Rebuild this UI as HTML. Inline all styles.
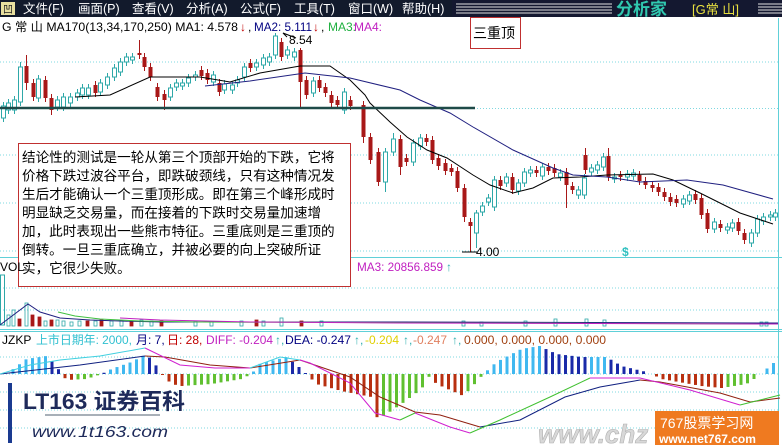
<!DOCTYPE html>
<html><head><meta charset="utf-8">
<style>
html,body{margin:0;padding:0;background:#fff;width:782px;height:445px;overflow:hidden}
svg{display:block}
text{font-family:"Liberation Sans","Noto Sans CJK SC",sans-serif}
.cj{font-family:"Liberation Sans","Noto Sans CJK SC",sans-serif}
</style></head><body>
<svg id="s" width="782" height="445" viewBox="0 0 782 445" xmlns="http://www.w3.org/2000/svg">
<rect width="782" height="445" fill="#fff"/>
<rect x="0" y="0" width="782" height="17" fill="#141830"/>
<rect x="0" y="0" width="452" height="17" fill="#121a2c"/>
<rect x="1" y="2" width="14" height="13" fill="#e8e0a0"/>
<text x="3" y="13" font-size="10" fill="#202020">凹</text>
<g font-size="12.5" fill="#fff" class="cj">
<text x="23" y="13">文件(F)</text><text x="78" y="13">画面(P)</text><text x="132" y="13">查看(V)</text>
<text x="186" y="13">分析(A)</text><text x="240" y="13">公式(F)</text><text x="294" y="13">工具(T)</text>
<text x="348" y="13">窗口(W)</text><text x="402" y="13">帮助(H)</text>
</g>
<g stroke="#e0e0e0" stroke-width="1">
<line x1="456" y1="4" x2="612" y2="4"/><line x1="456" y1="7" x2="612" y2="7"/><line x1="456" y1="10" x2="612" y2="10"/><line x1="456" y1="13" x2="612" y2="13"/>
<line x1="758" y1="4" x2="782" y2="4"/><line x1="758" y1="7" x2="782" y2="7"/><line x1="758" y1="10" x2="782" y2="10"/><line x1="758" y1="13" x2="782" y2="13"/>
</g>
<text x="616" y="15" font-size="17" font-weight="bold" fill="#30c8b0">分析家</text>
<text x="692" y="14" font-size="13" fill="#e8e040">[G常 山]</text>

<g font-size="12">
<text x="2" y="31" fill="#000" textLength="236" lengthAdjust="spacingAndGlyphs">G 常 山  MA170(13,34,170,250)  MA1: 4.578</text>
<text x="240" y="31" fill="#c00000">↓</text><text x="248" y="31" fill="#000">,</text>
<text x="254" y="31" fill="#000080" textLength="58" lengthAdjust="spacingAndGlyphs">MA2: 5.111</text>
<text x="313" y="31" fill="#c00000">↓</text><text x="321" y="31" fill="#000">,</text>
<text x="328" y="31" fill="#20b040">MA3:</text><text x="354" y="31" fill="#c020c0">MA4:</text>
</g>
<rect x="470.5" y="17.5" width="50" height="31" fill="#fff" stroke="#c03030"/>
<text x="473" y="38" font-size="14" fill="#000">三重顶</text>

<g stroke="#7fd8e0" stroke-dasharray="1,2" stroke-width="1">
<line x1="0" y1="62" x2="778" y2="62"/><line x1="0" y1="108.5" x2="778" y2="108.5"/>
<line x1="0" y1="155" x2="778" y2="155"/><line x1="0" y1="203" x2="778" y2="203"/>
<line x1="0" y1="251" x2="778" y2="251"/>
<line x1="0" y1="288" x2="778" y2="288"/><line x1="0" y1="310" x2="778" y2="310"/>
<line x1="0" y1="357" x2="778" y2="357"/><line x1="0" y1="374" x2="778" y2="374"/>
<line x1="0" y1="392" x2="778" y2="392"/><line x1="0" y1="410" x2="778" y2="410"/>
<line x1="0" y1="428" x2="778" y2="428"/>
</g>
<g stroke="#60d0d8" stroke-width="1">
<line x1="0" y1="257.5" x2="782" y2="257.5"/><line x1="0" y1="329.5" x2="782" y2="329.5"/>
<line x1="0" y1="331.5" x2="782" y2="331.5"/>
<line x1="778.5" y1="18" x2="778.5" y2="445"/>
</g>
<g id="candles"></g>
<g fill="none" stroke-width="1">
<polyline stroke="#000" points="75,97 110,95 150,77 200,77 230,82 260,73 300,66 330,66 350,80 365,95 370,103 390,122 407,137 427,150 447,158 473,175 490,185 513,193 533,188 553,178 580,177 607,175 653,174 673,180 700,193 740,213 773,224"/>
<polyline stroke="#202080" points="205,86 250,81 305,73 350,78 400,90 420,100 450,113 473,127 513,150 553,168 573,175 607,177 640,182 687,180 723,185 773,199"/>
</g>
<line x1="0" y1="108" x2="475" y2="108" stroke="#1e4a48" stroke-width="2.5"/>
<g font-size="12" fill="#000">
<polyline points="296,38 283,33 287,37" fill="none" stroke="#000"/><text x="289" y="44">8.54</text>
<polyline points="462,252 477,252" stroke="#000"/><text x="476" y="256">4.00</text>
<text x="622" y="256" fill="#30c0c0" font-weight="bold">$</text>
</g>

<rect x="18.5" y="143.5" width="332" height="143" fill="#fff" stroke="#c03030"/>
<g font-size="13.6" fill="#000" class="cj">
<text x="22" y="162">结论性的测试是一轮从第三个顶部开始的下跌，它将</text>
<text x="22" y="180.5">价格下跌过波谷平台，即跌破颈线，只有这种情况发</text>
<text x="22" y="199">生后才能确认一个三重顶形成。即在第三个峰形成时</text>
<text x="22" y="217.5">明显缺乏交易量，而在接着的下跌时交易量加速增</text>
<text x="22" y="236">加，此时表现出一些熊市特征。三重底则是三重顶的</text>
<text x="22" y="254.5">倒转。一旦三重底确立，并被必要的向上突破所证</text>
<text x="22" y="273">实，它很少失败。</text>
</g>
<text x="0" y="271" font-size="12" fill="#000">VOL</text>
<text x="357" y="271" font-size="12" fill="#c020c0" textLength="86" lengthAdjust="spacingAndGlyphs">MA3: 20856.859</text>
<text x="446" y="271" font-size="12" fill="#30b0b0">↑</text>
<g id="vol"></g>
<g font-size="12">
<text x="2" y="344" fill="#000">JZKP</text>
<text x="36" y="344" fill="#30c0d0" textLength="96" lengthAdjust="spacingAndGlyphs">上市日期年: 2000,</text>
<text x="136" y="344" fill="#000080">月: 7,</text>
<text x="167" y="344" fill="#c00000">日: 28,</text>
<text x="206" y="344" fill="#c020c0" textLength="67" lengthAdjust="spacingAndGlyphs">DIFF: -0.204</text><text x="275" y="344" fill="#30b0b0">↑,</text>
<text x="285" y="344" fill="#000080" textLength="66" lengthAdjust="spacingAndGlyphs">DEA: -0.247</text><text x="354" y="344" fill="#30b0b0">↑,</text>
<text x="365" y="344" fill="#e0d000">-0.204</text><text x="403" y="344" fill="#30b0b0">↑,</text>
<text x="413" y="344" fill="#e08060">-0.247</text><text x="452" y="344" fill="#30b0b0">↑,</text>
<text x="464" y="344" fill="#a04010" textLength="142" lengthAdjust="spacingAndGlyphs">0.000, 0.000, 0.000, 0.000</text>
</g>
<g id="hist"></g>
<g fill="none" stroke-width="1">
<polyline stroke="#102080" points="0,374 80,365 145,356"/>
<polyline stroke="#902010" points="145,356 165,357 210,365 250,368 300,360 350,377 380,397 415,412 440,415 480,427"/>
<polyline stroke="#102080" points="480,427 520,420 565,397 600,387 640,380"/>
<polyline stroke="#902010" points="640,380 660,382 720,393 750,402 780,398"/>
<polyline stroke="#40d0e0" points="0,374 30,365 60,360 100,356 145,348"/>
<polyline stroke="#d020d0" points="145,348 180,365 215,368 250,368"/>
<polyline stroke="#40d0e0" points="250,368 280,357 300,360"/>
<polyline stroke="#d020d0" points="300,360 310,363 350,383 375,413 400,420"/>
<polyline stroke="#40c030" points="400,420 415,413"/>
<polyline stroke="#d020d0" points="415,413 450,427 470,433"/>
<polyline stroke="#40c030" points="470,433 500,420 550,397 590,378"/>
<polyline stroke="#d020d0" points="590,378 640,378 690,390 740,405"/>
<polyline stroke="#40c030" points="740,405 780,395"/>
</g>
<rect x="8" y="383" width="4" height="60" fill="#1a3a90"/>
<text x="23" y="409" font-size="22" font-weight="bold" fill="#1e2a5a" font-family="Liberation Serif,Noto Serif CJK SC,serif" textLength="162" lengthAdjust="spacingAndGlyphs">LT163 证券百科</text>
<line x1="45" y1="415" x2="160" y2="415" stroke="#506070"/>
<text x="32" y="437" font-size="16" font-style="italic" fill="#1e2a5a" font-family="Liberation Serif,serif" textLength="136" lengthAdjust="spacingAndGlyphs">www.1t163.com</text>
<text x="538" y="443" font-size="26" font-style="italic" font-weight="bold" fill="#d8d8d8" stroke="#b0b0b0" stroke-width="0.6">www.chz</text>
<rect x="655" y="411" width="124" height="34" fill="#ef7a20"/>
<text x="660" y="428" font-size="14" fill="#fff" class="cj">767股票学习网</text>
<text x="659" y="443" font-size="12" font-weight="bold" fill="#fff" font-family="Liberation Mono,monospace">www.net767.com</text>
</svg>
<script>
var NS="http://www.w3.org/2000/svg";
function el(p,t,a){var e=document.createElementNS(NS,t);for(var k in a)e.setAttribute(k,a[k]);p.appendChild(e);return e;}
var C=[["c",3,106,118],["c",8,103,110],["c",14,100,110],["c",20,67,102,62],["r",26,66,83,55,90],["r",33,83,97],["c",38,79,98],["r",45,80,98],["r",51,98,110,0,115],["c",57,100,107],["c",63,97,107],["c",70,97,103],["c",77,93,97],["c",82,88,95],["c",88,88,95],["r",95,85,93],["c",100,83,92],["c",107,77,85],["c",114,68,77],["c",120,62,72],["c",126,57,62],["c",132,57,60],["r",139,53,55,40],["r",144,57,67],["r",150,67,77],["r",157,87,97],["r",164,94,100,0,110],["c",170,88,97],["c",176,83,87],["c",182,83,86],["c",188,78,83],["c",195,75,77],["r",201,70,76],["r",207,73,80],["c",213,75,82],["r",219,83,92],["c",224,84,90],["c",232,85,90],["c",237,80,83],["c",244,67,77],["r",250,63,68],["c",256,63,67],["c",263,58,65],["c",269,57,62],["c",275,36,55,33],["r",281,42,57],["c",287,50,55],["c",294,52,57],["r",300,50,82,48,108],["r",306,80,95],["c",313,81,93],["r",319,80,88],["r",325,87,93],["r",331,95,103],["r",337,100,105],["c",344,92,110],["r",350,100,106],
["r",363,105,137,0,143],["r",370,137,160],["r",378,152,182],["c",385,152,182,0,192],["c",393,139,152,133],["r",400,139,167,0,175],["r",406,158,162],["c",413,143,162],["c",420,138,146],["r",426,138,142],["r",432,140,160],["r",438,158,166],["r",445,163,171],["r",451,168,172],["r",457,171,188],["r",464,188,217,0,222],["r",470,222,226,0,252],["c",476,213,233,210,248],["c",482,206,212],["c",488,198,202],["c",494,180,207],["r",500,180,186],["c",506,177,183],["r",512,177,190],["c",518,183,191],["c",524,172,183],["c",530,170,173],["r",536,170,173],["c",542,167,176],["r",548,167,171],["r",554,168,173],["c",560,173,177],["r",566,172,185,0,208],["r",572,186,190],["c",578,190,195],["c",584,178,195],["r",585,155,170,148],["c",591,168,172],["c",597,165,170],["c",603,157,167],["r",608,156,177,148],["c",614,177,179],["r",620,175,177],["c",627,174,177],["c",633,173,176],["r",639,175,181],["r",645,181,185],["r",652,185,188],["r",658,187,192],["r",664,192,197],["r",670,197,202],["r",676,199,203],["c",683,199,204],["c",689,195,201],["r",695,194,200],["r",701,198,215],["r",707,213,229],["c",714,222,229],["r",720,224,228],["c",727,227,230],["c",732,223,228],["r",738,222,231],["r",744,233,240],["c",751,233,243],["c",757,219,233],["c",763,217,221],["c",770,215,217],["c",775,213,217]];
var g=document.getElementById("candles");
C.forEach(function(d){var col=d[0]=="r"?"#a81818":"#2ea8a8";var x=d[1],t=d[2],b=d[3];var hi=d[4]||t-4,lo=d[5]||b+4;
el(g,"line",{x1:x+0.5,y1:hi,x2:x+0.5,y2:lo,stroke:col});
if(d[0]=="r")el(g,"rect",{x:x-1.5,y:t,width:4,height:Math.max(1,b-t),fill:col});
else el(g,"rect",{x:x-1.5,y:t,width:4,height:Math.max(1,b-t),fill:"#fff",stroke:col});});
var v=document.getElementById("vol");
el(v,"rect",{x:0.5,y:275,width:4,height:50,fill:"none",stroke:"#2ea8a8"});
var vb=[[7,315,"c"],[12,310,"c"],[18,319,"r"],[25,303,"c"],[31,315,"r"],[38,317,"r"],[44,321,"c"],[50,320,"r"],[56,320,"c"],[62,321,"c"],[70,322,"c"],[78,321,"c"],[86,321,"r"],[94,321,"c"],[100,320,"r"],[110,321,"c"],[120,321,"c"],[130,321,"r"],[140,320,"c"],[150,321,"c"],[160,321,"r"],[194,321,"c"],[210,322,"c"],[240,321,"c"],[255,320,"r"],[262,321,"c"],[280,318,"c"],[300,321,"r"],[320,321,"c"],[462,321,"c"],[480,322,"c"],[524,321,"c"],[554,319,"c"],[585,319,"c"],[603,320,"c"],[760,322,"c"],[765,322,"c"]];
vb.forEach(function(d){var c=d[2]=="r"?"#a81818":"#2ea8a8";el(v,"rect",{x:d[0],y:d[1],width:3,height:326-d[1],fill:d[2]=="r"?c:"none",stroke:c,"stroke-width":0.8});});
el(v,"polyline",{points:"0,325 28,304 40,312 60,318 90,320 120,321 160,322 200,322 330,322 400,322 778,323",fill:"none",stroke:"#202080"});
el(v,"polyline",{points:"58,312 75,316 100,319 140,321 200,322 778,324",fill:"none",stroke:"#40c040"});
el(v,"polyline",{points:"120,318 160,320 250,322 400,323 778,324",fill:"none",stroke:"#c020c0"});
var K=[[5,0],[25,-15],[45,-18],[55,-8],[60,0],[65,6],[85,5],[100,0],[110,-5],[130,-12],[145,-20],[155,-8],[160,0],[170,10],[180,12],[210,10],[240,5],[250,0],[258,-10],[285,-17],[300,-5],[305,0],[315,10],[340,17],[370,23],[376,45],[385,40],[400,30],[420,15],[428,2],[435,10],[462,22],[475,8],[482,0],[495,-12],[520,-25],[538,-28],[555,-20],[580,-17],[605,-17],[620,-8],[645,-2],[650,0],[660,5],[700,12],[720,14],[745,10],[760,0],[770,-10],[778,-14]];
function f(x){for(var i=0;i<K.length-1;i++){if(x>=K[i][0]&&x<=K[i+1][0]){var t=(x-K[i][0])/(K[i+1][0]-K[i][0]);return K[i][1]+t*(K[i+1][1]-K[i][1]);}}return 0;}
var h=document.getElementById("hist");var prev=0;
for(var x=5;x<778;x+=6.5){var val=f(x);var col;
if(val<0)col=Math.abs(val)>=Math.abs(prev)?"#40b8f0":"#1a2aa8";else col=val>=prev?"#b83010":"#60c030";
if(Math.abs(val)>0.8){el(h,"rect",{x:x,y:val<0?374+val:374,width:3,height:Math.abs(val),fill:col});}
prev=val;}
</script>
</body></html>
